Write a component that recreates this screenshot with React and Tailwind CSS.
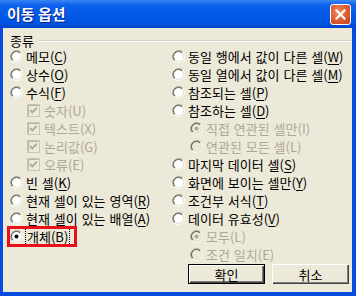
const FONT = { fontFamily: '"Noto Sans CJK KR", "Noto Sans", sans-serif' };

const Radio = ({ checked, disabled }) => (
  <svg width="13" height="13" viewBox="0 0 13 13" className="shrink-0">
    <circle cx="6.5" cy="6.5" r="5.5" fill={disabled ? "#ECE9D8" : "#FFFFFF"} />
    <path d="M2.26 10.74A6 6 0 0 1 10.74 2.26" fill="none" stroke="#9D9A8C" />
    <path d="M10.74 2.26A6 6 0 0 1 2.26 10.74" fill="none" stroke="#FFFFFF" />
    <path d="M2.96 10.04A5 5 0 0 1 10.04 2.96" fill="none" stroke="#5A5850" />
    <path d="M10.04 2.96A5 5 0 0 1 2.96 10.04" fill="none" stroke="#E2DFD0" />
    {checked && <circle cx="6.5" cy="6.5" r="2" fill={disabled ? "#ACA899" : "#000000"} />}
  </svg>
);

const Check = () => (
  <svg width="13" height="13" viewBox="0 0 13 13" className="shrink-0">
    <rect x="0.5" y="0.5" width="12" height="12" fill="#ECE9D8" stroke="#C9C6B6" />
    <path d="M1.5 11.5V1.5H11.5" fill="none" stroke="#B5B2A3" />
    <polyline points="3.2,6.2 5.3,8.4 9.8,3.9" fill="none" stroke="#ACA899" strokeWidth="1.8" />
  </svg>
);

const Label = ({ text, k, disabled }) => (
  <span className={disabled ? "text-[#ACA899]" : "text-black"}>
    {text}(
    {disabled ? k : <span className="underline underline-offset-2">{k}</span>})
  </span>
);

const Opt = ({ text, k, checked, disabled, box, indent }) => (
  <div className={`flex items-center h-[18px] gap-[3px] ${indent}`}>
    {box ? <Check /> : <Radio checked={checked} disabled={disabled} />}
    <span className={box ? "ml-[1px]" : ""}>
      <Label text={text} k={k} disabled={disabled} />
    </span>
  </div>
);

const Button = ({ children, primary }) => (
  <button
    className={`w-[77px] h-[20px] flex items-center justify-center text-[13px] text-black bg-[#ECE9D8] ${
      primary
        ? "border border-black shadow-[inset_1px_1px_0_#fff,inset_-1px_-1px_0_#404040,inset_-2px_-2px_0_#808080]"
        : "shadow-[inset_1px_1px_0_#fff,inset_-1px_-1px_0_#404040,inset_-2px_-2px_0_#808080]"
    }`}
    style={FONT}
  >
    {children}
  </button>
);

export default function App() {
  return (
    <div
      className="w-[356px] h-[296px] flex flex-col bg-[#0A4BDF] overflow-hidden"
      style={FONT}
    >
      <div className="h-[28px] shrink-0 flex items-center justify-between pl-[7px] pr-[5px] bg-[linear-gradient(to_bottom,#3A86F4_0%,#0E62EC_18%,#0058E8_55%,#0052E0_85%,#0044C8_100%)]">
        <span className="text-white font-bold text-[15px] [text-shadow:1px_1px_0_#0A1E8C]">
          이동 옵션
        </span>
        <div className="w-[21px] h-[21px] rounded-[3px] border border-white flex items-center justify-center bg-[radial-gradient(circle_at_40%_35%,#F08A62_0%,#DD5A2F_55%,#C2401C_100%)]">
          <svg width="11" height="11" viewBox="0 0 11 11">
            <path d="M1.5 1.5L9.5 9.5M9.5 1.5L1.5 9.5" stroke="#fff" strokeWidth="2.2" strokeLinecap="square" />
          </svg>
        </div>
      </div>

      <div className="flex-1 ml-[3px] mr-[4px] mb-[4px] bg-[#ECE9D8] text-[13px] leading-none [word-spacing:1px]">
        <div className="h-[19px] flex items-center pl-[7px] pt-[6px]">
          <span className="text-black">종류</span>
          <div className="flex-1 ml-[5px] mr-[1px] mt-[1px] h-[2px] border-t border-[#D0D0BF] border-b-white border-b" />
        </div>

        <div className="grid grid-cols-[162px_1fr] pl-[7px]">
          <div className="flex flex-col">
            <Opt text="메모" k="C" />
            <Opt text="상수" k="O" />
            <Opt text="수식" k="F" />
            <Opt text="숫자" k="U" box disabled indent="pl-[17px]" />
            <Opt text="텍스트" k="X" box disabled indent="pl-[17px]" />
            <Opt text="논리값" k="G" box disabled indent="pl-[17px]" />
            <Opt text="오류" k="E" box disabled indent="pl-[17px]" />
            <Opt text="빈 셀" k="K" />
            <Opt text="현재 셀이 있는 영역" k="R" />
            <Opt text="현재 셀이 있는 배열" k="A" />
            <div className="relative flex items-center h-[18px] gap-[3px]">
              <Radio checked />
              <span className="border border-dotted border-black px-[1px] py-[2px] -ml-[1px]">
                <Label text="개체" k="B" />
              </span>
              <div className="absolute -left-[3px] -top-[1px] w-[70px] h-[21px] border-[3px] border-[#E8101A]" />
            </div>
          </div>

          <div className="flex flex-col">
            <Opt text="동일 행에서 값이 다른 셀" k="W" />
            <Opt text="동일 열에서 값이 다른 셀" k="M" />
            <Opt text="참조되는 셀" k="P" />
            <Opt text="참조하는 셀" k="D" />
            <Opt text="직접 연관된 셀만" k="I" checked disabled indent="pl-[18px]" />
            <Opt text="연관된 모든 셀" k="L" disabled indent="pl-[18px]" />
            <Opt text="마지막 데이터 셀" k="S" />
            <Opt text="화면에 보이는 셀만" k="Y" />
            <Opt text="조건부 서식" k="T" />
            <Opt text="데이터 유효성" k="V" />
            <Opt text="모두" k="L" checked disabled indent="pl-[18px]" />
            <Opt text="조건 일치" k="E" disabled indent="pl-[18px]" />
            <div className="flex gap-[7px] pl-[16px] pt-[1px]">
              <Button primary>확인</Button>
              <Button>취소</Button>
            </div>
          </div>
        </div>
      </div>
    </div>
  );
}
